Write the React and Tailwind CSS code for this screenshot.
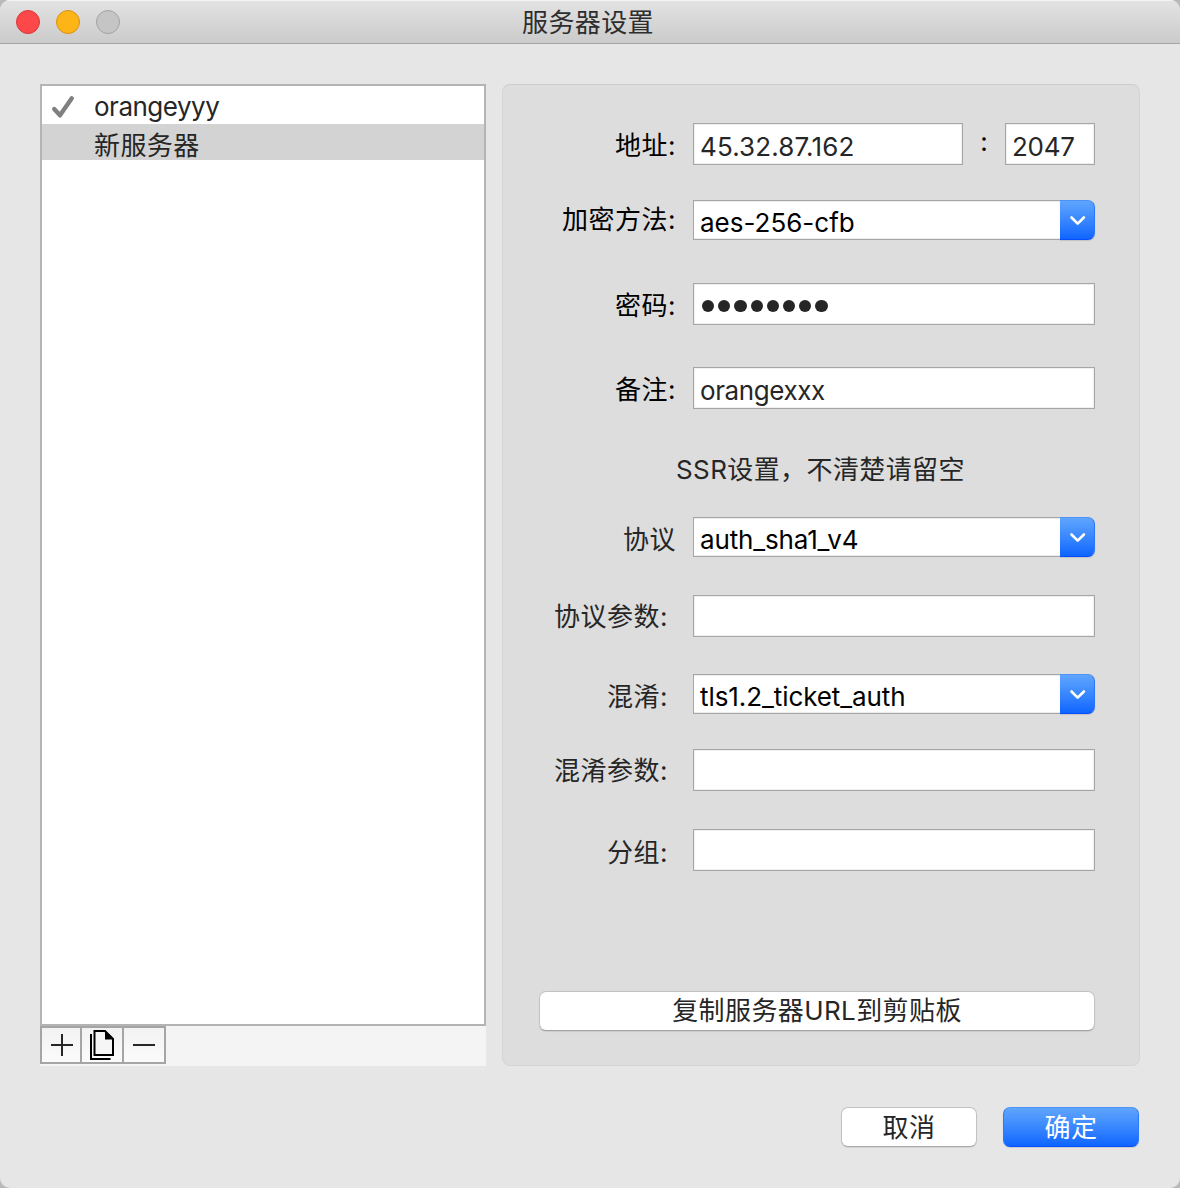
import clsx from 'clsx';

const servers = [
    { name: 'orangeyyy', active: true },
    { name: '新服务器', selected: true },
];

const Label = ({ children, className }) => (
    <label className={clsx("w-[190px] shrink-0 text-right whitespace-nowrap h-10 leading-[40px] tracking-[0.5px]", className)}>
        {children}
    </label>
);

const Field = ({ children, className }) => (
    <div className={clsx(
        "h-[42px] bg-white border border-[#a6a6a6] shadow-[inset_0_0_0_1px_#efefef] pl-1.5 pt-0.5 leading-[42px] whitespace-nowrap text-[#262626]",
        className
    )}>
        {children}
    </div>
);

const Combo = ({ children, className }) => (
    <div className="flex w-[402px] h-10">
        <div className={clsx("flex-1 bg-white border border-r-0 border-[#a6a6a6] shadow-[inset_0_1px_0_#ececec,inset_0_-1px_0_#ececec] pl-1.5 pt-0.5 leading-[40px] whitespace-nowrap text-black", className)}>
            {children}
        </div>
        <div className="w-[35px] h-10 rounded-r-[7px] bg-gradient-to-b from-[#5fa5fd] to-[#0d65ff] border border-l-0 border-t-[#4b93f6] border-r-[#2a78fb] border-b-[#0a4dff] shadow-[0_1px_1px_rgba(0,0,0,0.12)] flex items-center justify-center pt-px">
            <svg width="17" height="12" viewBox="0 0 17 12" fill="none" stroke="white" strokeWidth="2.6" strokeLinecap="round" strokeLinejoin="round">
                <path d="M2.5 2.5 L8.7 8.7 L14.9 2.5" />
            </svg>
        </div>
    </div>
);

const TitleBar = () => (
    <div className="relative h-11 bg-gradient-to-b from-[#e3e3e3] to-[#cbcbcb] border-b border-[#a4a4a4] shadow-[inset_0_1px_0_#f4f4f4] flex items-center justify-center">
        <div className="absolute left-4 top-[10px] flex gap-4">
            <span className="w-6 h-6 rounded-full bg-[#fc4848] border border-[#dc3537]" />
            <span className="w-6 h-6 rounded-full bg-[#fdb417] border border-[#d99013]" />
            <span className="w-6 h-6 rounded-full bg-[#c5c5c5] border border-[#a2a2a2]" />
        </div>
        <h1 className="pt-0.5 pr-1 text-[#2e2e2e] tracking-[0.4px]">服务器设置</h1>
    </div>
);

const ServerList = () => (
    <div className="w-[446px] h-[982px] flex flex-col bg-[#f4f4f4]">
        <ul className="h-[942px] bg-white border-2 border-[#b4b4b4]">
            {servers.map((server) => (
                <li
                    key={server.name}
                    className={clsx(
                        "flex text-[#262626]",
                        server.selected ? "h-9 leading-[43px] bg-[#d3d3d3]" : "h-[38px] leading-[42px]"
                    )}
                >
                    <span className="w-[52px] shrink-0">
                        {server.active && (
                            <svg className="mt-[9px] ml-2" width="26" height="24" viewBox="0 0 26 24" fill="none" stroke="#808080" strokeWidth="4.4" strokeLinecap="round" strokeLinejoin="round">
                                <path d="M4.2 14 L10 20.3 L21.8 3.3" />
                            </svg>
                        )}
                    </span>
                    <span className={server.selected ? "tracking-[0.4px]" : "tracking-[-0.5px]"}>{server.name}</span>
                </li>
            ))}
        </ul>
        <div className="flex w-[126px] h-[38px] border-2 border-[#a5a5a5] divide-x-2 divide-[#a5a5a5] bg-gradient-to-b from-[#f2f2f2] to-[#fbfbfb]">
            <button className="w-10 shrink-0">
                <svg width="38" height="34" viewBox="0 0 38 34" stroke="#262626" strokeWidth="2">
                    <path d="M9 17 H31 M20 6 V28" />
                </svg>
            </button>
            <button className="w-[42px] shrink-0">
                <svg width="40" height="34" viewBox="0 0 40 34" fill="none" stroke="#000" strokeWidth="2">
                    <path d="M12.5 3 H23 L31 11 V27 H12.5 Z" fill="#f6f6f6" />
                    <path d="M23 2.5 L32 11.5 H23 Z" fill="#000" stroke="none" />
                    <path d="M9 6 V31 H28.5" />
                </svg>
            </button>
            <button className="w-10 shrink-0">
                <svg width="40" height="34" viewBox="0 0 40 34" stroke="#262626" strokeWidth="2">
                    <path d="M9 17 H31" />
                </svg>
            </button>
        </div>
    </div>
);

const ServerForm = () => (
    <div className="w-[638px] h-[982px] rounded-lg bg-[#dddddd] border border-[#d5d5d5] border-t-[#cccccc] pt-[38px] text-[#262626]">
        <div className="flex">
            <Label className="pr-[17px] pt-[3px] text-black">地址:</Label>
            <Field className="w-[270px] tracking-[0.13px]">45.32.87.162</Field>
            <span className="w-[42px] text-center leading-[38px] text-black">:</span>
            <Field className="w-[90px] tracking-[-0.3px]">2047</Field>
        </div>
        <div className="flex mt-[35px]">
            <Label className="pr-[17px] text-black">加密方法:</Label>
            <Combo>aes-256-cfb</Combo>
        </div>
        <div className="flex mt-[43px]">
            <Label className="pr-[17px] pt-[3px] text-black">密码:</Label>
            <Field className="w-[402px] flex items-center gap-1 pl-2! pt-1!">
                {Array.from({ length: 8 }, (_, i) => (
                    <span key={i} className="w-[12.2px] h-3 rounded-full bg-[#262626]" />
                ))}
            </Field>
        </div>
        <div className="flex mt-[42px]">
            <Label className="pr-[17px] pt-[3px] text-black">备注:</Label>
            <Field className="w-[402px] tracking-[-0.4px]">orangexxx</Field>
        </div>
        <p className="mt-[40px] pl-[173px] h-10 leading-[41px] tracking-[0.4px]">SSR设置，不清楚请留空</p>
        <div className="flex mt-[28px]">
            <Label className="pr-[17px] pt-[3px]">协议</Label>
            <Combo className="tracking-[-0.15px]">auth_sha1_v4</Combo>
        </div>
        <div className="flex mt-[38px]">
            <Label className="pr-[25px] pt-0.5">协议参数:</Label>
            <Field className="w-[402px]" />
        </div>
        <div className="flex mt-[37px]">
            <Label className="pr-[25px] pt-[3px]">混淆:</Label>
            <Combo className="tracking-[-0.08px]">tls1.2_ticket_auth</Combo>
        </div>
        <div className="flex mt-[35px]">
            <Label className="pr-[25px] pt-0.5">混淆参数:</Label>
            <Field className="w-[402px]" />
        </div>
        <div className="flex mt-[38px]">
            <Label className="pr-[25px] pt-1">分组:</Label>
            <Field className="w-[402px]" />
        </div>
        <button className="block ml-9 mt-[120px] w-[556px] h-10 rounded-[7px] bg-white border border-[#c2c2c2] border-b-[#a2a2a2] shadow-[0_1px_1px_rgba(0,0,0,0.08)] leading-[38px] tracking-[0.4px]">
            复制服务器URL到剪贴板
        </button>
    </div>
);

export default function App() {
    return (
        <div className="w-[1180px] h-[1188px] bg-[#b9b9b9]">
            <div className="w-full h-full overflow-hidden rounded-[10px] bg-[#e6e6e6] font-['Inter','Noto_Sans_CJK_SC',sans-serif] font-[440] text-[26px]">
                <TitleBar />
                <div className="flex gap-4 pl-10 pt-10">
                    <ServerList />
                    <ServerForm />
                </div>
                <div className="flex justify-end gap-[26px] pr-[41px] mt-[41px] tracking-[0.4px]">
                    <button className="w-[136px] h-10 rounded-[7px] bg-white border border-[#c2c2c2] border-b-[#a8a8a8] shadow-[0_1px_1px_rgba(0,0,0,0.08)] leading-[39px] text-[#262626]">取消</button>
                    <button className="w-[136px] h-10 rounded-[7px] bg-gradient-to-b from-[#5fa5fd] to-[#0d65ff] border border-[#2a78fb] border-t-[#4b93f6] border-b-[#0a4dff] shadow-[0_1px_1px_rgba(0,0,0,0.12)] leading-[39px] text-white">确定</button>
                </div>
            </div>
        </div>
    );
}
